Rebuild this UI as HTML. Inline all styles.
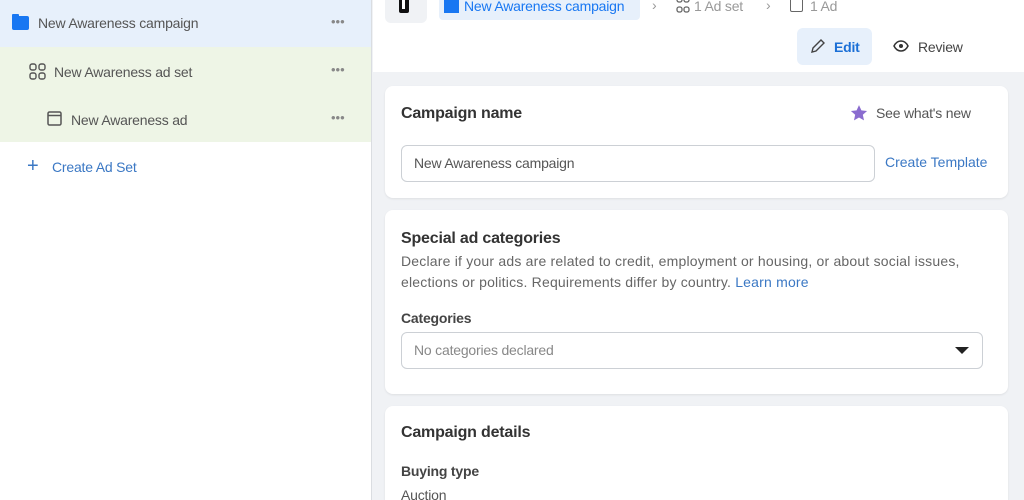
<!DOCTYPE html>
<html style="width:1024px;height:500px;overflow:hidden"><head><style>
*{margin:0;padding:0;box-sizing:border-box}
body{width:1024px;height:500px;overflow:hidden;font-family:"Liberation Sans",sans-serif;background:#f0f2f5;position:relative;color:#1c1e21;letter-spacing:-0.2px}
.a{position:absolute;white-space:nowrap}
.left{position:absolute;left:0;top:0;width:372px;height:500px;background:#fff;border-right:1px solid #dadde1}
.card{position:absolute;left:385px;width:623px;background:#fff;border-radius:8px;box-shadow:0 1px 2px rgba(0,0,0,.08)}
.dots{position:absolute;left:331px;font-size:13px;color:#888;letter-spacing:0px}
.h{font-size:16px;font-weight:bold;color:#333}
.inp{position:absolute;border:1px solid #ccd0d5;border-radius:6px;background:#fff}
</style></head><body>
<div class="left">
 <div class="a" style="left:0;top:0;width:371px;height:47px;background:#e7f0fb"></div>
 <div class="a" style="left:0;top:47px;width:371px;height:95px;background:#eef5e6"></div>
 <div class="a" style="left:12px;top:16px;width:17px;height:14px;background:#1877f2;border-radius:2px"></div>
 <div class="a" style="left:12px;top:14px;width:7px;height:4px;background:#1877f2;border-radius:1px"></div>
 <div class="a" style="left:38px;top:15px;font-size:14px;color:#555">New Awareness campaign</div>
 <div class="dots" style="top:14px">•••</div>
 <svg class="a" style="left:29px;top:63px" width="17" height="17" viewBox="0 0 17 17" fill="none" stroke="#555" stroke-width="1.4"><rect x="1" y="1" width="6" height="6" rx="2"/><rect x="10" y="1" width="6" height="6" rx="2"/><rect x="1" y="10" width="6" height="6" rx="2"/><rect x="10" y="10" width="6" height="6" rx="2"/></svg>
 <div class="a" style="left:54px;top:64px;font-size:14px;color:#555">New Awareness ad set</div>
 <div class="dots" style="top:62px">•••</div>
 <svg class="a" style="left:47px;top:111px" width="15" height="15" viewBox="0 0 15 15" fill="none" stroke="#555" stroke-width="1.5"><rect x="1" y="1" width="13" height="13" rx="1.5"/><line x1="1" y1="4.5" x2="14" y2="4.5"/></svg>
 <div class="a" style="left:71px;top:112px;font-size:14px;color:#555">New Awareness ad</div>
 <div class="dots" style="top:110px">•••</div>
 <div class="a" style="left:27px;top:155px;font-size:20px;color:#3b78c4">+</div>
 <div class="a" style="left:52px;top:159px;font-size:14px;color:#3b78c4">Create Ad Set</div>
</div>
<div class="a" style="left:373px;top:0;width:651px;height:72px;background:#fff"></div>
<div class="a" style="left:385px;top:0;width:42px;height:23px;background:#f0f2f5;border-radius:0 0 6px 6px"></div>
<div class="a" style="left:399px;top:0;width:10px;height:13px;background:#111;border-radius:0 0 2px 2px"></div>
<div class="a" style="left:402px;top:0;width:3px;height:9px;background:#fff"></div>
<div class="a" style="left:439px;top:0;width:201px;height:20px;background:#e7f0fb;border-radius:0 0 4px 4px"></div>
<div class="a" style="left:444px;top:0;width:15px;height:13px;background:#1877f2"></div>
<div class="a" style="left:464px;top:-2px;font-size:14px;color:#1877f2">New Awareness campaign</div>
<div class="a" style="left:652px;top:-3px;font-size:14px;color:#999">›</div>
<svg class="a" style="left:676px;top:0" width="14" height="13" viewBox="0 0 14 13" fill="none" stroke="#666" stroke-width="1.3"><rect x="1" y="-3" width="5" height="5" rx="2"/><rect x="8" y="-3" width="5" height="5" rx="2"/><rect x="1" y="7" width="5" height="5" rx="2"/><rect x="8" y="7" width="5" height="5" rx="2"/></svg>
<div class="a" style="left:694px;top:-2px;font-size:14px;color:#999">1 Ad set</div>
<div class="a" style="left:766px;top:-3px;font-size:14px;color:#999">›</div>
<div class="a" style="left:790px;top:-2px;width:13px;height:14px;border:1.3px solid #666;border-radius:2px"></div>
<div class="a" style="left:810px;top:-2px;font-size:14px;color:#999">1 Ad</div>
<div class="a" style="left:797px;top:28px;width:75px;height:37px;background:#e7f0fb;border-radius:6px"></div>
<svg class="a" style="left:810px;top:38px" width="16" height="16" viewBox="0 0 16 16" fill="none" stroke="#444" stroke-width="1.4"><path d="M11 2l3 3-8 8-4 1 1-4z"/></svg>
<div class="a" style="left:834px;top:39px;font-size:14px;font-weight:bold;color:#1b6fd6">Edit</div>
<svg class="a" style="left:893px;top:40px" width="16" height="12" viewBox="0 0 16 12"><path d="M1 6C3 2 6 1 8 1s5 1 7 5c-2 4-5 5-7 5S3 10 1 6z" fill="none" stroke="#333" stroke-width="1.5"/><circle cx="8" cy="6" r="2" fill="#333"/></svg>
<div class="a" style="left:918px;top:39px;font-size:14px;color:#444">Review</div>

<div class="card" style="top:86px;height:112px">
 <div class="a h" style="left:16px;top:19px">Campaign name</div>
 <svg class="a" style="left:465px;top:18px" width="18" height="18" viewBox="0 0 24 24"><path d="M12 1.5l3.2 7 7.6.8-5.7 5.1 1.6 7.5L12 18l-6.7 3.9 1.6-7.5L1.2 9.3l7.6-.8z" fill="#8a6ccf"/></svg>
 <div class="a" style="left:491px;top:19px;font-size:14px;color:#555">See what's new</div>
 <div class="inp" style="left:16px;top:59px;width:474px;height:37px"></div>
 <div class="a" style="left:29px;top:69px;font-size:14px;color:#555">New Awareness campaign</div>
 <div class="a" style="left:500px;top:68px;font-size:14px;color:#3b78c4;letter-spacing:0">Create Template</div>
</div>
<div class="card" style="top:210px;height:184px">
 <div class="a h" style="left:16px;top:20px">Special ad categories</div>
 <div class="a" style="left:16px;top:41px;font-size:14px;color:#666;line-height:21px;letter-spacing:0.2px">Declare if your ads are related to credit, employment or housing, or about social issues,<br>elections or politics. Requirements differ by country. <span style="color:#3b78c4">Learn more</span></div>
 <div class="a" style="left:16px;top:100px;font-size:14px;font-weight:bold;color:#444">Categories</div>
 <div class="inp" style="left:16px;top:122px;width:582px;height:37px"></div>
 <div class="a" style="left:29px;top:132px;font-size:14px;color:#888">No categories declared</div>
 <div class="a" style="left:570px;top:137px;width:0;height:0;border-left:7px solid transparent;border-right:7px solid transparent;border-top:7px solid #222"></div>
</div>
<div class="card" style="top:406px;height:94px;border-radius:8px 8px 0 0">
 <div class="a h" style="left:16px;top:18px">Campaign details</div>
 <div class="a" style="left:16px;top:57px;font-size:14px;font-weight:bold;color:#444">Buying type</div>
 <div class="a" style="left:16px;top:81px;font-size:14px;color:#555">Auction</div>
</div>
</body></html>
